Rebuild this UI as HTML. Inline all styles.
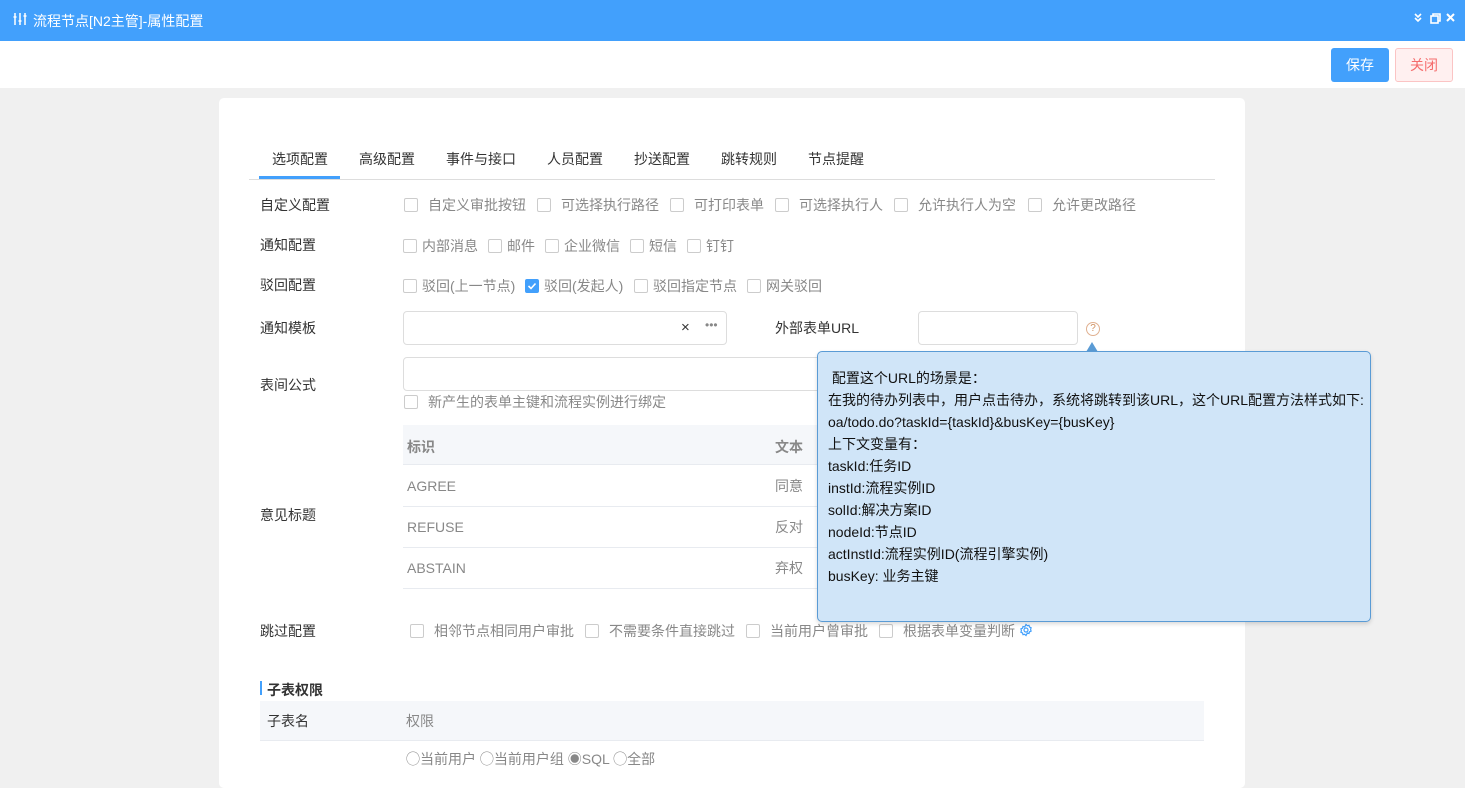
<!DOCTYPE html>
<html><head><meta charset="utf-8"><style>
*{box-sizing:border-box;margin:0;padding:0}
body{width:1465px;height:775px;overflow:hidden;background:#f0f0f0;font-family:"Liberation Sans","Noto Sans CJK SC",sans-serif;font-size:14px;color:#333;position:relative}
.a{position:absolute;white-space:nowrap}
.cb{position:absolute;width:14px;height:14px;border:1px solid #ccc;border-radius:2px;background:#fff}
.t{position:absolute;white-space:nowrap;color:#888;font-size:14px;line-height:16px}
.l{position:absolute;white-space:nowrap;color:#333;font-size:14px;line-height:16px}
.inp{position:absolute;border:1px solid #ddd;border-radius:4px;background:#fff}
</style></head><body>
<div class="a" style="left:0;top:0;width:1465px;height:41px;background:#42a0fc"></div>
<div class="a" style="left:13px;top:12px;color:#fff;font-size:12px">
<svg width="14" height="14" viewBox="0 0 14 14" fill="none" stroke="#fff" stroke-width="1.5"><path d="M2 1v12M7 1v12M12 1v12"/><path d="M0.5 5h3M5.5 9h3M10.5 4h3"/></svg></div>
<div class="a" style="left:33px;top:12px;color:#fff;font-size:14px;line-height:18px">流程节点[N2主管]-属性配置</div>
<div class="a" style="left:1414px;top:12px;color:#fff;font-size:10px;line-height:12px">
<svg width="48" height="14" viewBox="0 0 48 14" fill="none" stroke="#fff" stroke-width="1.6"><path d="M1 2l3 3 3-3M1 6l3 3 3-3"/><rect x="17" y="4" width="7" height="7"/><path d="M19 4V2h7v7h-2"/><path d="M33 2l7 7M40 2l-7 7" stroke-width="2"/></svg></div>
<div class="a" style="left:0;top:41px;width:1465px;height:47px;background:#fff"></div>
<div class="a" style="left:1331px;top:48px;width:58px;height:34px;background:#42a0fc;border-radius:3px;color:#fff;text-align:center;line-height:34px">保存</div>
<div class="a" style="left:1395px;top:48px;width:58px;height:34px;background:#fff0f0;border:1px solid #fbc4c4;border-radius:3px;color:#f56c6c;text-align:center;line-height:32px">关闭</div>

<div class="a" style="left:219px;top:98px;width:1026px;height:690px;background:#fff;border-radius:5px"></div>
<div class="a" style="left:249px;top:179px;width:966px;height:1px;background:#ddd"></div>
<div class="a" style="left:259px;top:176px;width:81px;height:3px;background:#42a0fc"></div>
<div class="l" style="left:272px;top:151px">选项配置</div>
<div class="l" style="left:359px;top:151px">高级配置</div>
<div class="l" style="left:446px;top:151px">事件与接口</div>
<div class="l" style="left:547px;top:151px">人员配置</div>
<div class="l" style="left:634px;top:151px">抄送配置</div>
<div class="l" style="left:721px;top:151px">跳转规则</div>
<div class="l" style="left:808px;top:151px">节点提醒</div>

<div class="l" style="left:260px;top:197px">自定义配置</div>
<div class="cb" style="left:404px;top:198px"></div><div class="t" style="left:428px;top:197px">自定义审批按钮</div>
<div class="cb" style="left:537px;top:198px"></div><div class="t" style="left:561px;top:197px">可选择执行路径</div>
<div class="cb" style="left:670px;top:198px"></div><div class="t" style="left:694px;top:197px">可打印表单</div>
<div class="cb" style="left:775px;top:198px"></div><div class="t" style="left:799px;top:197px">可选择执行人</div>
<div class="cb" style="left:894px;top:198px"></div><div class="t" style="left:918px;top:197px">允许执行人为空</div>
<div class="cb" style="left:1028px;top:198px"></div><div class="t" style="left:1052px;top:197px">允许更改路径</div>

<div class="l" style="left:260px;top:237px">通知配置</div>
<div class="cb" style="left:403px;top:239px"></div><div class="t" style="left:422px;top:238px">内部消息</div>
<div class="cb" style="left:488px;top:239px"></div><div class="t" style="left:507px;top:238px">邮件</div>
<div class="cb" style="left:545px;top:239px"></div><div class="t" style="left:564px;top:238px">企业微信</div>
<div class="cb" style="left:630px;top:239px"></div><div class="t" style="left:649px;top:238px">短信</div>
<div class="cb" style="left:687px;top:239px"></div><div class="t" style="left:706px;top:238px">钉钉</div>

<div class="l" style="left:260px;top:277px">驳回配置</div>
<div class="cb" style="left:403px;top:279px"></div><div class="t" style="left:422px;top:278px">驳回(上一节点)</div>
<div class="cb" style="left:525px;top:279px;background:#42a0fc;border-color:#42a0fc"><svg width="12" height="12" viewBox="0 0 12 12" style="position:absolute;left:0;top:0"><path d="M2.5 6l2.5 2.5 4.5-5" stroke="#fff" stroke-width="1.6" fill="none"/></svg></div><div class="t" style="left:544px;top:278px">驳回(发起人)</div>
<div class="cb" style="left:634px;top:279px"></div><div class="t" style="left:653px;top:278px">驳回指定节点</div>
<div class="cb" style="left:747px;top:279px"></div><div class="t" style="left:766px;top:278px">网关驳回</div>

<div class="l" style="left:260px;top:320px">通知模板</div>
<div class="inp" style="left:403px;top:311px;width:324px;height:34px"></div>
<div class="a" style="left:681px;top:319px;color:#333;font-size:15px">×</div>
<div class="a" style="left:705px;top:318px;color:#888;font-size:12px">•••</div>
<div class="l" style="left:775px;top:320px">外部表单URL</div>
<div class="inp" style="left:918px;top:311px;width:160px;height:34px"></div>
<div class="a" style="left:1086px;top:322px;width:14px;height:14px;border:1px solid #e0b090;border-radius:50%;color:#d09060;font-size:10px;line-height:12px;text-align:center">?</div>

<div class="l" style="left:260px;top:377px">表间公式</div>
<div class="inp" style="left:403px;top:357px;width:801px;height:34px"></div>
<div class="cb" style="left:404px;top:395px"></div><div class="t" style="left:428px;top:394px">新产生的表单主键和流程实例进行绑定</div>

<div class="a" style="left:403px;top:425px;width:801px;height:40px;background:#f5f7fa;border-bottom:1px solid #e8ebf0"></div>
<div class="a" style="left:407px;top:437px;color:#888;font-weight:bold;font-size:14px">标识</div>
<div class="a" style="left:775px;top:437px;color:#888;font-weight:bold;font-size:14px">文本</div>
<div class="a" style="left:403px;top:506px;width:801px;height:1px;background:#e8ebf0"></div>
<div class="a" style="left:403px;top:547px;width:801px;height:1px;background:#e8ebf0"></div>
<div class="a" style="left:403px;top:588px;width:801px;height:1px;background:#e8ebf0"></div>
<div class="t" style="left:407px;top:478px">AGREE</div><div class="t" style="left:775px;top:478px">同意</div>
<div class="t" style="left:407px;top:519px">REFUSE</div><div class="t" style="left:775px;top:519px">反对</div>
<div class="t" style="left:407px;top:560px">ABSTAIN</div><div class="t" style="left:775px;top:560px">弃权</div>
<div class="l" style="left:260px;top:507px">意见标题</div>

<div class="l" style="left:260px;top:623px">跳过配置</div>
<div class="cb" style="left:410px;top:624px"></div><div class="t" style="left:434px;top:623px">相邻节点相同用户审批</div>
<div class="cb" style="left:585px;top:624px"></div><div class="t" style="left:609px;top:623px">不需要条件直接跳过</div>
<div class="cb" style="left:746px;top:624px"></div><div class="t" style="left:770px;top:623px">当前用户曾审批</div>
<div class="cb" style="left:879px;top:624px"></div><div class="t" style="left:903px;top:623px">根据表单变量判断</div>
<div class="a" style="left:1019px;top:623px"><svg width="14" height="14" viewBox="0 0 14 14" fill="none" stroke="#42a0fc" stroke-width="1.2"><circle cx="7" cy="7" r="2"/><path d="M7 1.5l1.3 1.2 1.7-.4.5 1.7 1.6.7-.5 1.7.5 1.7-1.6.7-.5 1.7-1.7-.4L7 12.5l-1.3-1.2-1.7.4-.5-1.7-1.6-.7.5-1.7-.5-1.7 1.6-.7.5-1.7 1.7.4z"/></svg></div>

<div class="a" style="left:260px;top:681px;width:2px;height:14px;background:#42a0fc"></div>
<div class="a" style="left:267px;top:680px;font-weight:bold;font-size:14px;color:#333">子表权限</div>
<div class="a" style="left:260px;top:701px;width:944px;height:40px;background:#f5f7fa;border-bottom:1px solid #e8ebf0"></div>
<div class="l" style="left:267px;top:713px">子表名</div>
<div class="t" style="left:406px;top:713px">权限</div>
<div class="t" style="left:406px;top:751px;color:#888">◯当前用户 ◯当前用户组 ◉SQL ◯全部</div>

<div class="a" style="left:1086px;top:342px;width:0;height:0;border-left:6px solid transparent;border-right:6px solid transparent;border-bottom:10px solid #5a9bd5"></div>
<div class="a" style="left:817px;top:351px;width:554px;height:271px;background:#d0e5f8;border:1px solid #5a9bd5;border-radius:5px;box-shadow:0 2px 4px rgba(0,0,0,.15);padding:15px 0 0 10px;color:#111;font-size:14px;line-height:22px;white-space:pre">&nbsp;配置这个URL的场景是：
在我的待办列表中，用户点击待办，系统将跳转到该URL，这个URL配置方法样式如下:
oa/todo.do?taskId={taskId}&amp;busKey={busKey}
上下文变量有：
taskId:任务ID
instId:流程实例ID
solId:解决方案ID
nodeId:节点ID
actInstId:流程实例ID(流程引擎实例)
busKey: 业务主键</div>
</body></html>
